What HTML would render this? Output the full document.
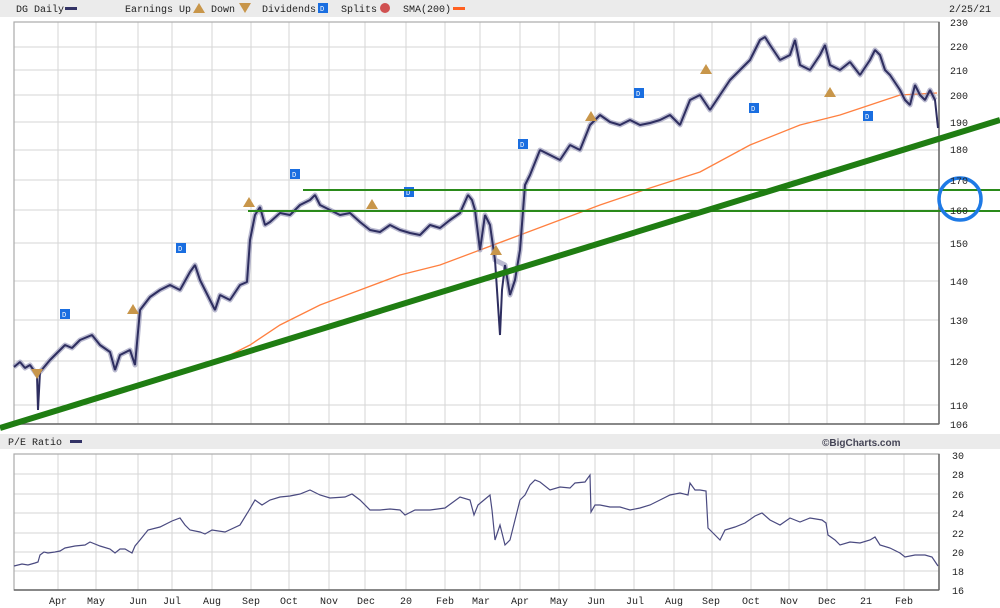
<!DOCTYPE html>
<html><head><meta charset="utf-8"><style>
html,body{margin:0;padding:0;background:#fff;}
body{width:1000px;height:608px;overflow:hidden;position:relative;font-family:"Liberation Mono",monospace;}
svg{position:absolute;left:0;top:0;}
</style></head><body>
<svg width="1000" height="608" viewBox="0 0 1000 608" xmlns="http://www.w3.org/2000/svg" font-family="Liberation Sans, sans-serif">
<rect x="0" y="0" width="1000" height="17" fill="#ebebeb"/>
<rect x="0" y="434" width="1000" height="15" fill="#ebebeb"/>
<g font-family="Liberation Mono, monospace" font-size="10" fill="#222">
<text x="16" y="12">DG Daily</text><rect x="65" y="7" width="12" height="3" fill="#333366"/>
<text x="125" y="12">Earnings Up</text><polygon points="193,13 199,3 205,13" fill="#c8964a"/>
<text x="211" y="12">Down</text><polygon points="239,3 251,3 245,13" fill="#c8964a"/>
<text x="262" y="12">Dividends</text><rect x="318" y="3" width="10" height="10" fill="#1a6ee0"/><text x="320" y="11" font-size="7" fill="#fff">D</text>
<text x="341" y="12">Splits</text><circle cx="385" cy="8" r="5" fill="#d05050"/>
<text x="403" y="12">SMA(200)</text><rect x="453" y="7" width="12" height="3" fill="#ff6020"/>
<text x="949" y="12">2/25/21</text>
<text x="8" y="445">P/E Ratio</text><rect x="70" y="440" width="12" height="3" fill="#333366"/>
<text x="822" y="446" font-family="Liberation Sans, sans-serif" font-weight="bold" fill="#445">©BigCharts.com</text>
</g>
<g stroke="#d6d6d6" stroke-width="1">
<line x1="14" y1="47" x2="939" y2="47"/><line x1="14" y1="70" x2="939" y2="70"/><line x1="14" y1="95" x2="939" y2="95"/><line x1="14" y1="122" x2="939" y2="122"/><line x1="14" y1="150" x2="939" y2="150"/><line x1="14" y1="180" x2="939" y2="180"/><line x1="14" y1="210" x2="939" y2="210"/><line x1="14" y1="243" x2="939" y2="243"/><line x1="14" y1="281" x2="939" y2="281"/><line x1="14" y1="320" x2="939" y2="320"/><line x1="14" y1="361" x2="939" y2="361"/><line x1="14" y1="405" x2="939" y2="405"/>
<line x1="14" y1="474" x2="939" y2="474"/><line x1="14" y1="494" x2="939" y2="494"/><line x1="14" y1="513" x2="939" y2="513"/><line x1="14" y1="533" x2="939" y2="533"/><line x1="14" y1="552" x2="939" y2="552"/><line x1="14" y1="571" x2="939" y2="571"/>
<path d="M58 22V424M96 22V424M138 22V424M172 22V424M212 22V424M251 22V424M289 22V424M329 22V424M365 22V424M406 22V424M445 22V424M480 22V424M520 22V424M559 22V424M595 22V424M634 22V424M674 22V424M712 22V424M751 22V424M789 22V424M827 22V424M865 22V424M904 22V424"/>
<path d="M58 454V590M96 454V590M138 454V590M172 454V590M212 454V590M251 454V590M289 454V590M329 454V590M365 454V590M406 454V590M445 454V590M480 454V590M520 454V590M559 454V590M595 454V590M634 454V590M674 454V590M712 454V590M751 454V590M789 454V590M827 454V590M865 454V590M904 454V590"/>
</g>
<rect x="14" y="22" width="925" height="402" fill="none" stroke="#aaa" stroke-width="1.2"/>
<line x1="939" y1="22" x2="939" y2="424" stroke="#666" stroke-width="1.5"/>
<line x1="14" y1="424" x2="939" y2="424" stroke="#666" stroke-width="1.5"/>
<rect x="14" y="454" width="925" height="136" fill="none" stroke="#aaa" stroke-width="1.2"/>
<line x1="939" y1="454" x2="939" y2="590" stroke="#666" stroke-width="1.5"/>
<line x1="14" y1="590" x2="939" y2="590" stroke="#666" stroke-width="1.5"/>
<polyline fill="none" stroke="#ff8040" stroke-width="1.3" points="210,365 250,345 280,325 320,305 360,290 400,275 440,265 480,250 520,235 560,220 600,205 650,188 700,172 750,145 800,125 840,115 870,105 900,95 937,93"/>
<polyline fill="none" stroke="#8c8cb0" stroke-width="5" stroke-linejoin="round" opacity="0.6" points="14,367 20,362 25,368 30,365 37,375 40,372 50,360 58,352 65,345 72,348 80,340 92,335 100,345 110,352 115,370 120,355 130,350 135,365 140,310 150,297 160,290 170,285 180,290 190,272 195,265 200,280 210,300 215,310 220,295 230,300 240,285 247,282 250,240 255,215 260,207 265,225 270,222 280,213 290,215 300,205 310,200 315,195 320,205 330,210 340,215 350,213 360,222 370,230 380,232 390,225 400,230 410,233 420,235 430,225 440,228 450,220 460,213 468,195 472,200 475,210 480,250 485,215 490,225 495,260 505,265 510,295 515,280 520,250 525,185 530,175 540,150 550,155 560,160 570,145 580,150 590,125 600,115 610,122 620,125 630,120 640,125 650,123 660,120 670,115 680,125 690,100 700,95 710,110 720,95 730,80 740,70 750,60 760,40 765,37 770,45 780,60 790,55 795,40 800,65 810,70 820,55 825,45 830,65 840,70 850,62 860,75 870,60 875,50 880,55 885,70 890,75 900,90 905,100 910,105 915,85 920,95 925,100 930,90 935,100"/>
<polyline fill="none" stroke="#2e2e60" stroke-width="2" stroke-linejoin="bevel" points="14,367 20,362 25,368 30,365 37,375 38,410 40,372 50,360 58,352 65,345 72,348 80,340 92,335 100,345 110,352 115,370 120,355 130,350 135,365 140,310 150,297 160,290 170,285 180,290 190,272 195,265 200,280 210,300 215,310 220,295 230,300 240,285 247,282 250,240 255,215 260,207 265,225 270,222 280,213 290,215 300,205 310,200 315,195 320,205 330,210 340,215 350,213 360,222 370,230 380,232 390,225 400,230 410,233 420,235 430,225 440,228 450,220 460,213 468,195 472,200 475,210 480,250 485,215 490,225 495,260 500,335 502,290 505,265 510,295 515,280 520,250 525,185 530,175 540,150 550,155 560,160 570,145 580,150 590,125 600,115 610,122 620,125 630,120 640,125 650,123 660,120 670,115 680,125 690,100 700,95 710,110 720,95 730,80 740,70 750,60 760,40 765,37 770,45 780,60 790,55 795,40 800,65 810,70 820,55 825,45 830,65 840,70 850,62 860,75 870,60 875,50 880,55 885,70 890,75 900,90 905,100 910,105 915,85 920,95 925,100 930,90 935,100 938,128"/>
<g font-family="Liberation Mono, monospace" font-size="7" fill="#fff">
<rect x="60" y="309" width="10" height="10" fill="#1a6ee0"/><text x="62" y="317">D</text>
<rect x="176" y="243" width="10" height="10" fill="#1a6ee0"/><text x="178" y="251">D</text>
<rect x="290" y="169" width="10" height="10" fill="#1a6ee0"/><text x="292" y="177">D</text>
<rect x="404" y="187" width="10" height="10" fill="#1a6ee0"/><text x="406" y="195">D</text>
<rect x="518" y="139" width="10" height="10" fill="#1a6ee0"/><text x="520" y="147">D</text>
<rect x="634" y="88" width="10" height="10" fill="#1a6ee0"/><text x="636" y="96">D</text>
<rect x="749" y="103" width="10" height="10" fill="#1a6ee0"/><text x="751" y="111">D</text>
<rect x="863" y="111" width="10" height="10" fill="#1a6ee0"/><text x="865" y="119">D</text>
</g>
<g fill="#c8964a">
<polygon points="127,314 133,304 139,314"/><polygon points="243,207 249,197 255,207"/><polygon points="366,209 372,199 378,209"/><polygon points="490,255 496,245 502,255"/><polygon points="585,121 591,111 597,121"/><polygon points="700,74 706,64 712,74"/><polygon points="824,97 830,87 836,97"/><polygon points="31,369 43,369 37,379"/>
</g>
<line x1="303" y1="190" x2="1000" y2="190" stroke="#2a8a1a" stroke-width="2"/>
<line x1="248" y1="211" x2="1000" y2="211" stroke="#2a8a1a" stroke-width="2"/>
<line x1="0" y1="428" x2="1000" y2="120" stroke="#1f7d12" stroke-width="6"/>
<circle cx="960" cy="199" r="21" fill="none" stroke="#1e7ae6" stroke-width="3.5"/>
<polyline fill="none" stroke="#4a4a80" stroke-width="1.2" points="14,566 22,564 28,565 35,563 38,562 40,555 44,552 48,553 55,552 60,551 65,548 75,546 85,545 90,542 100,546 110,549 115,553 120,549 125,549 132,553 135,546 140,540 148,530 160,527 172,521 180,518 185,525 190,530 200,532 205,534 212,530 225,532 240,525 248,512 255,500 262,505 270,500 280,497 290,496 300,494 310,490 320,495 330,498 345,497 352,494 360,500 370,510 380,510 390,509 400,510 405,515 415,510 430,510 445,508 460,497 470,500 474,515 478,505 484,500 490,495 492,510 495,540 500,525 505,545 510,540 515,520 520,500 525,495 530,485 535,480 540,482 550,490 560,487 570,488 575,483 585,482 590,475 591,512 595,505 600,505 610,507 620,507 630,510 640,508 650,505 660,500 670,495 680,493 688,495 690,483 695,490 700,490 706,491 708,528 715,535 720,540 725,530 735,527 745,523 755,516 762,513 770,520 780,525 790,518 800,522 810,518 822,520 826,523 828,535 835,540 840,545 850,542 860,543 870,540 875,537 880,545 890,548 900,553 905,557 915,555 925,555 932,557 938,566"/>
<g font-family="Liberation Mono, monospace" font-size="10" fill="#222">
<text x="950" y="26">230</text><text x="950" y="50">220</text><text x="950" y="74">210</text><text x="950" y="99">200</text><text x="950" y="126">190</text><text x="950" y="153">180</text><text x="950" y="184">170</text><text x="950" y="214">160</text><text x="950" y="247">150</text><text x="950" y="285">140</text><text x="950" y="324">130</text><text x="950" y="365">120</text><text x="950" y="409">110</text><text x="950" y="428">106</text>
<text x="952" y="459">30</text><text x="952" y="478">28</text><text x="952" y="498">26</text><text x="952" y="517">24</text><text x="952" y="537">22</text><text x="952" y="556">20</text><text x="952" y="575">18</text><text x="952" y="594">16</text>
</g>
<g font-family="Liberation Mono, monospace" font-size="10" fill="#222" text-anchor="middle">
<text x="58" y="604">Apr</text><text x="96" y="604">May</text><text x="138" y="604">Jun</text><text x="172" y="604">Jul</text><text x="212" y="604">Aug</text><text x="251" y="604">Sep</text><text x="289" y="604">Oct</text><text x="329" y="604">Nov</text><text x="366" y="604">Dec</text><text x="406" y="604">20</text><text x="445" y="604">Feb</text><text x="481" y="604">Mar</text><text x="520" y="604">Apr</text><text x="559" y="604">May</text><text x="596" y="604">Jun</text><text x="635" y="604">Jul</text><text x="674" y="604">Aug</text><text x="711" y="604">Sep</text><text x="751" y="604">Oct</text><text x="789" y="604">Nov</text><text x="827" y="604">Dec</text><text x="866" y="604">21</text><text x="904" y="604">Feb</text>
</g>
</svg>
</body></html>
